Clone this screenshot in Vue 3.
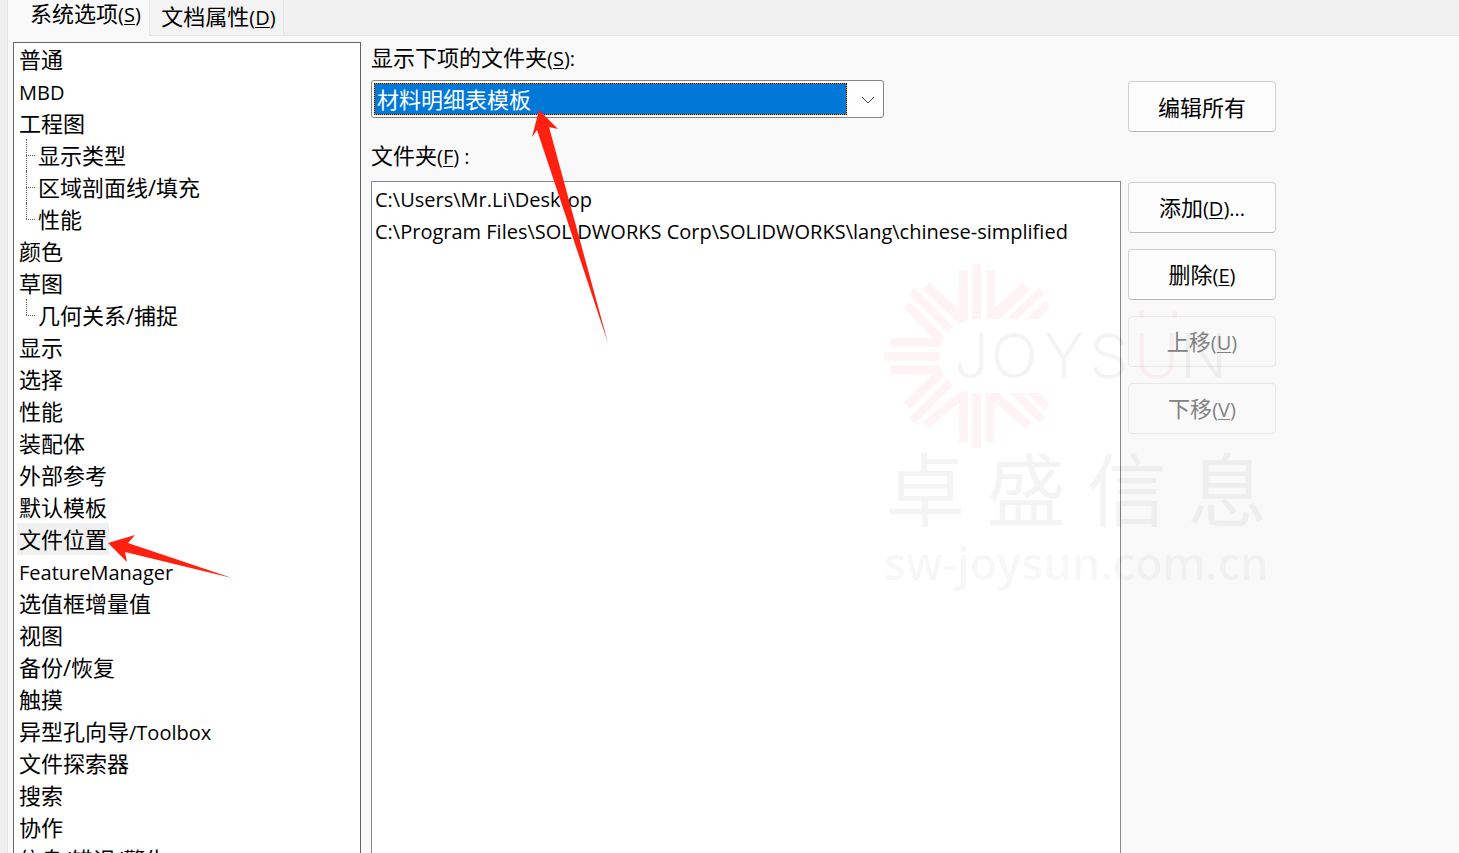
<script setup>
import { ref } from 'vue'

const categories = [
  { name: '普通' },
  { name: '', latin: 'MBD' },
  { name: '工程图', children: ['显示类型', '区域剖面线/填充', '性能'] },
  { name: '颜色' },
  { name: '草图', children: ['几何关系/捕捉'] },
  { name: '显示' },
  { name: '选择' },
  { name: '性能' },
  { name: '装配体' },
  { name: '外部参考' },
  { name: '默认模板' },
  { name: '文件位置' },
  { name: '', latin: 'FeatureManager' },
  { name: '选值框增量值' },
  { name: '视图' },
  { name: '备份/恢复' },
  { name: '触摸' },
  { name: '异型孔向导', latin: '/Toolbox' },
  { name: '文件探索器' },
  { name: '搜索' },
  { name: '协作' },
  { name: '信息/错误/警告' },
]
const current = ref(11)
const folderType = ref('材料明细表模板')
const folders = [
  'C:\\Users\\Mr.Li\\Desktop',
  'C:\\Program Files\\SOLIDWORKS Corp\\SOLIDWORKS\\lang\\chinese-simplified',
]
</script>

<template>
  <div class="dialog">
    <div class="tabs" role="tablist">
      <button class="tab active" role="tab" aria-selected="true">系统选项<span class="latin">(<u>S</u>)</span></button>
      <button class="tab" role="tab" aria-selected="false">文档属性<span class="latin">(<u>D</u>)</span></button>
    </div>

    <div class="page">
      <nav class="tree" aria-label="系统选项">
        <ul>
          <li v-for="(c, i) in categories" :key="i">
            <button class="item" :class="{ selected: i === current }" @click="current = i">{{ c.name }}<span v-if="c.latin" class="latin">{{ c.latin }}</span></button>
            <ul v-if="c.children" class="children">
              <li v-for="k in c.children" :key="k"><button class="item">{{ k }}</button></li>
            </ul>
          </li>
        </ul>
      </nav>

      <main class="content">
        <label class="caption" for="folder-type">显示下项的文件夹<span class="latin">(<u>S</u>):</span></label>
        <div class="combo">
          <select id="folder-type" v-model="folderType">
            <option>材料明细表模板</option>
          </select>
          <svg class="chevron" viewBox="0 0 14 8" aria-hidden="true"><path d="M1 1l6 6 6-6" /></svg>
        </div>
        <span id="folders-label" class="caption second">文件夹<span class="latin">(<u>F</u>) :</span></span>
        <ul class="folders" aria-labelledby="folders-label">
          <li v-for="f in folders" :key="f">{{ f }}</li>
        </ul>
      </main>

      <div class="actions">
        <button class="push edit">编辑所有</button>
        <button class="push">添加<span class="latin">(<u>D</u>)...</span></button>
        <button class="push">删除<span class="latin">(<u>E</u>)</span></button>
        <button class="push" disabled>上移<span class="latin">(<u>U</u>)</span></button>
        <button class="push" disabled>下移<span class="latin">(<u>V</u>)</span></button>
      </div>
    </div>

    <svg class="watermark" viewBox="0 0 1260 1050" aria-hidden="true">
      <g class="rays">
        <path d="M306 41h27v165h-27z" />
        <path d="M349 60h26v112l83-75 23 20-93 90h-39z" />
        <path d="M508 110l18 19-82 77h-33z" />
        <path d="M526 152l17 18-35 36h-38z" />
        <path d="M267 60h27v148l-27 15L158 117l19-20 90 80z" />
        <path d="M135 114L250 229l-18 20L116 133z" />
        <path d="M119 156l103 102-13 33H61v-27h125L102 175z" />
        <path d="M43 305h166v27H43z" />
        <path d="M61 346h148l13 31-103 101-19-18 86-87H62z" />
        <path d="M232 387l18 20-115 115-19-19z" />
        <path d="M267 427l27-6v156h-27v-119l-90 77-19-19z" />
        <path d="M306 430h28v164h-28z" />
        <path d="M347 429h40l97 88-18 20-93-80v119h-26z" />
        <path d="M417 429h38l71 72-17 17z" />
        <path d="M470 429h38l33 34-17 18z" />
      </g>
      <text class="brand" y="385"><tspan x="252">J</tspan><tspan x="362">O</tspan><tspan x="520">Y</tspan><tspan x="658">S</tspan><tspan class="accent" x="792">U</tspan><tspan x="930">N</tspan></text>
      <path class="accent" d="M807 203v-17l14-4v21zM907 203v-21l14 4v17z" />
      <text class="company" y="810"><tspan x="46">卓</tspan><tspan x="348">盛</tspan><tspan x="650">信</tspan><tspan x="952">息</tspan></text>
      <text class="site" x="42" y="990">sw-joysun.com.cn</text>
    </svg>
    <svg class="arrow to-combo" viewBox="0 0 80 240" aria-hidden="true">
      <path d="M9 0L28 19 19 17 78 233 7 20 2 27z" />
    </svg>
    <svg class="arrow to-item" viewBox="0 0 124 46" aria-hidden="true">
      <path d="M0 8L27 0 20 8 124 43 17 17 19 27z" />
    </svg>
  </div>
</template>

<style>
body {
  overflow: hidden;
}
</style>

<style scoped>
.dialog {
  position: relative;
  display: flex;
  flex-direction: column;
  height: 100vh;
  overflow: hidden;
  background: #f0f0f0;
  color: #000;
  font: 22px/32px "Open Sans", "Noto Sans CJK SC", sans-serif;
}
button,
select {
  font: inherit;
  color: inherit;
}
ul {
  margin: 0;
  padding: 0;
  list-style: none;
}
.latin {
  font-size: 20px;
}
u {
  text-decoration-thickness: 1px;
  text-underline-offset: 2px;
}
.tabs {
  display: flex;
  flex: none;
  height: 36px;
  padding-left: 7px;
}
.tab {
  width: 134px;
  padding: 0 0 2px 4px;
  border: solid #e5e5e5;
  border-width: 0 1px 1px 0;
  background: #f3f3f3;
  line-height: 24px;
  white-space: nowrap;
}
.tab.active {
  width: 143px;
  padding: 0 0 8px 14px;
  border-width: 0 1px;
  background: #f9f9f9;
}
.tabs::after {
  content: "";
  flex: 1;
  border-bottom: 1px solid #e5e5e5;
}
.page {
  display: grid;
  grid-template-columns: 348px minmax(0, 1fr) 148px;
  flex: 1;
  min-height: 0;
  margin-left: 7px;
  padding: 6px 183px 0 5px;
  border-left: 1px solid #e5e5e5;
  background: #f9f9f9;
}
.tree {
  overflow: hidden;
  border: solid #646464;
  border-width: 1px 1px 0;
  background: #fff;
}
.tree > ul {
  padding-left: 3px;
}
.item {
  display: block;
  height: 32px;
  padding: 0 2px;
  border: 0;
  background: none;
  line-height: 32px;
  white-space: nowrap;
}
.item.selected {
  background: #f0f0f0;
}
.children {
  padding-left: 9px;
}
.children li {
  position: relative;
  padding-left: 10px;
}
.children li::before,
.children li::after {
  content: "";
  position: absolute;
  left: 0;
  top: 0;
}
.children li::before {
  height: 100%;
  border-left: 1px dotted #606060;
}
.children li:last-child::before {
  height: 16px;
}
.children li::after {
  top: 16px;
  width: 9px;
  border-top: 1px dotted #606060;
}
.content {
  display: flex;
  flex-direction: column;
  min-height: 0;
  margin: 0 7px 0 10px;
}
.caption {
  flex: none;
  height: 32px;
  margin-bottom: 6px;
  line-height: 30px;
}
.caption.second {
  margin: 22px 0 9px;
}
.combo {
  position: relative;
  flex: none;
  width: 513px;
  max-width: 100%;
  height: 38px;
  box-sizing: border-box;
  padding: 2px 36px 2px 2px;
  border: 1px solid #868686;
  border-radius: 3px;
  background: #fff;
}
.combo select {
  display: block;
  width: 100%;
  height: 32px;
  padding: 0 2px;
  border: 1px dotted #000;
  border-radius: 0;
  outline: none;
  appearance: none;
  background: linear-gradient(#0078d7, #0078d7) padding-box, linear-gradient(#ff8728, #ff8728) border-box;
  color: #fff;
  line-height: 30px;
}
.chevron {
  position: absolute;
  right: 8px;
  top: 15px;
  width: 14px;
  height: 8px;
  fill: none;
  stroke: #444;
  pointer-events: none;
}
.folders {
  flex: 1;
  overflow: hidden;
  padding: 2px 3px;
  border: solid #828790;
  border-width: 1px 1px 0;
  background: #fff;
  font-size: 20px;
  white-space: nowrap;
}
.actions {
  display: flex;
  flex-direction: column;
  gap: 16px;
  padding-top: 39px;
}
.push {
  flex: none;
  height: 51px;
  padding: 0;
  border: 1px solid #d0d0d0;
  border-bottom-color: #b9b9b9;
  border-radius: 4px;
  background: #fdfdfd;
}
.push.edit {
  margin-bottom: 34px;
}
.push:disabled {
  border-color: #e8e8e8;
  background: #f9f9f9;
  color: #838383;
}
.watermark {
  position: absolute;
  top: 250px;
  right: 169px;
  width: 420px;
  height: 350px;
  fill: rgba(0, 0, 0, 0.043);
  pointer-events: none;
}
.rays,
.accent {
  fill: rgba(255, 0, 20, 0.045);
}
.brand {
  font: 300 186px Inter, sans-serif;
}
.company {
  font: 400 240px "Noto Sans CJK SC", sans-serif;
}
.site {
  font: 600 135px "Open Sans", sans-serif;
}
.arrow {
  position: absolute;
  fill: #ff2010;
  pointer-events: none;
}
.to-combo {
  left: 530px;
  top: 110px;
  width: 80px;
  height: 240px;
}
.to-item {
  left: 108px;
  top: 535px;
  width: 124px;
  height: 46px;
}
</style>
